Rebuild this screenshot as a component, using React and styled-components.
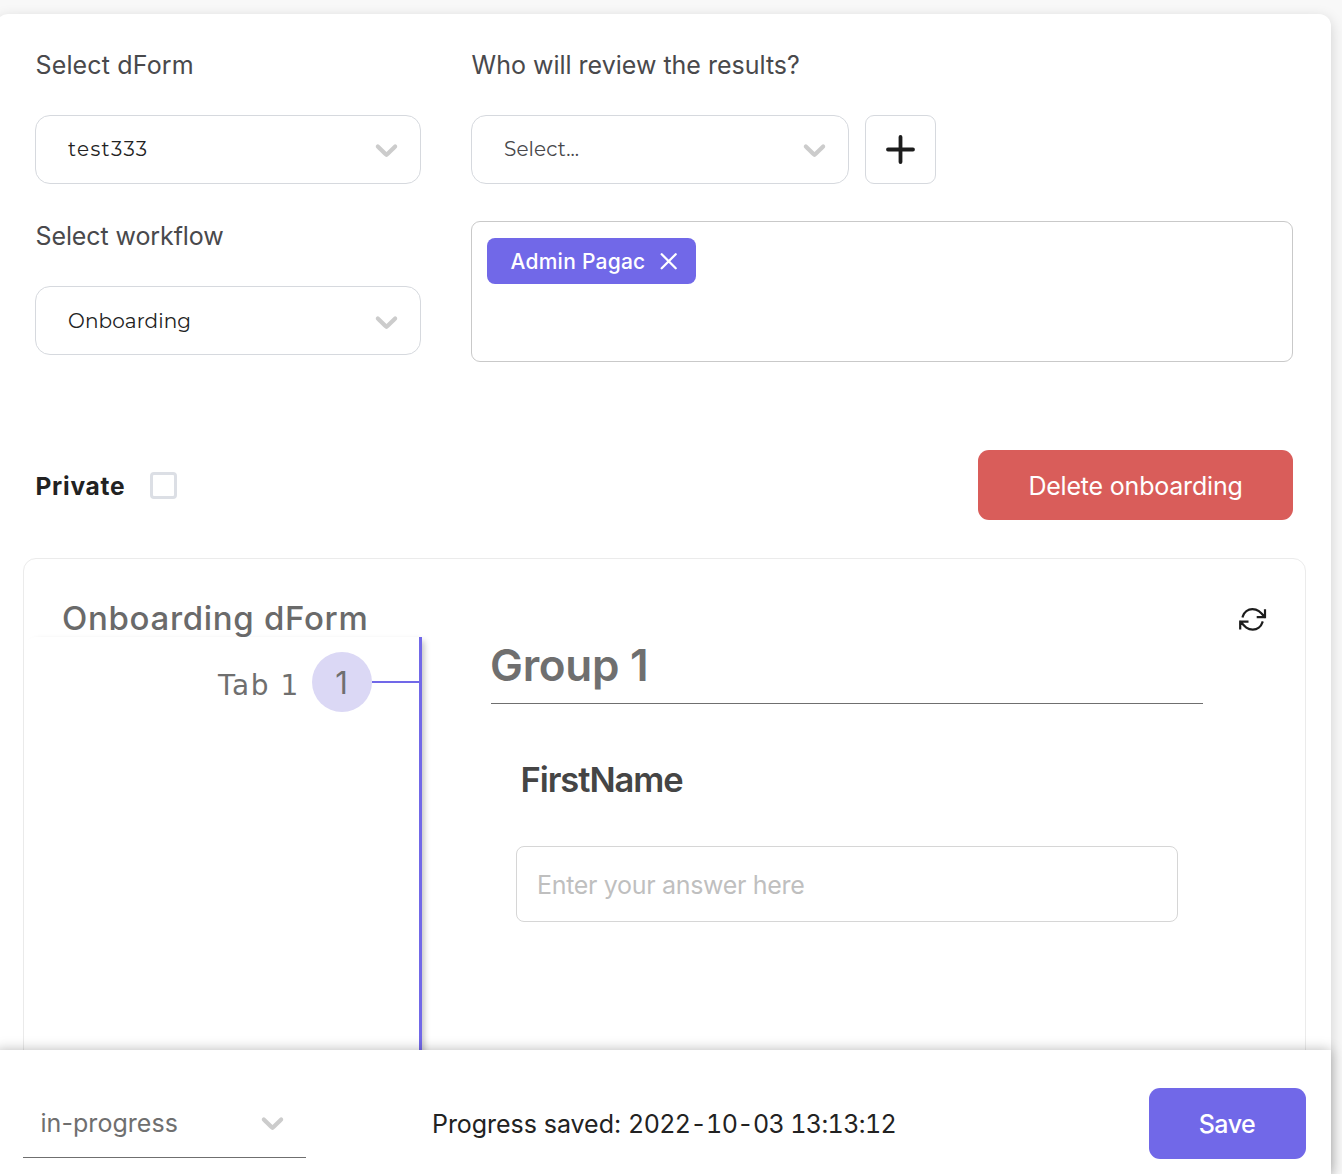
import React from "react";
import styled, { createGlobalStyle } from "styled-components";

const GlobalStyle = createGlobalStyle`
  *, *::before, *::after { box-sizing: border-box; }
  body {
    margin: 0;
    background: #f8f8f8;
    font-family: Inter, "Liberation Sans", sans-serif;
    font-size: 25px;
    color: #222;
  }
  button, input { font: inherit; margin: 0; }
`;

const Page = styled.div`
  height: 1174px;
  padding: 14px 11px 0 0;
  overflow: hidden;
`;

const Card = styled.main`
  display: flex;
  flex-direction: column;
  height: 1160px;
  margin-left: -4px;
  background: #fff;
  border-radius: 12px 12px 0 0;
  box-shadow: 0 4px 14px rgba(0, 0, 0, 0.17);
`;

const Body = styled.div`
  flex: 1;
  min-height: 0;
  overflow: hidden;
  padding: 35px 25px 0 27px;
`;

const Settings = styled.section`
  display: grid;
  grid-template-columns: 386px 822px;
  column-gap: 50px;
  padding-left: 12px;
`;

const Column = styled.div`
  display: flex;
  flex-direction: column;
  gap: ${(p) => p.$gap}px;
`;

const Field = styled.div`
  display: flex;
  flex-direction: column;
  gap: 34px;
`;

const Label = styled.label`
  height: 32px;
  padding-left: 0.5px;
  line-height: 32px;
  color: #49494c;
  letter-spacing: ${(p) => p.$tracking || 0}px;
`;

const SelectBox = styled.div`
  display: flex;
  flex: ${(p) => (p.$grow ? 1 : "none")};
  align-items: center;
  justify-content: space-between;
  height: 69px;
  padding: 0 15px ${(p) => (p.$raised ? 2 : 0)}px 32px;
  border: 1px solid #d6d9de;
  border-radius: 15px;
  font-family: Montserrat, Inter, sans-serif;
  font-size: 20px;
  font-weight: 450;
  color: ${(p) => (p.$placeholder ? "#48484b" : "#222")};
`;

const SelectValue = styled.span`
  line-height: 28px;
  letter-spacing: ${(p) => p.$tracking || 0}px;
`;

const ReviewerRow = styled.div`
  display: flex;
  gap: 16px;
  width: 465px;
`;

const AddButton = styled.button`
  display: grid;
  place-items: center;
  width: 71px;
  height: 69px;
  padding: 0;
  border: 1px solid #d6d9de;
  border-radius: 9px;
  background: #fff;
`;

const ReviewerList = styled.div`
  height: 141px;
  padding: 16px 15px;
  border: 1px solid #c9c9c9;
  border-radius: 9px;
`;

const Chip = styled.span`
  display: flex;
  align-items: center;
  width: 209px;
  height: 46px;
  padding: 0 18.5px 0 23.5px;
  justify-content: space-between;
  border-radius: 8px;
  background: #7168e8;
  color: #fff;
  font-size: 21px;
  font-weight: 500;
  letter-spacing: 0.25px;
`;

const Actions = styled.section`
  display: flex;
  align-items: center;
  height: 70px;
  margin: 88px 13px 38px 12px;
`;

const PrivateLabel = styled.label`
  display: flex;
  align-items: center;
  gap: 24.5px;
  padding: 1px 0 0 0.5px;
  font-size: 24.5px;
  font-weight: 700;
  letter-spacing: 0.75px;
`;

const Checkbox = styled.input`
  appearance: none;
  width: 27px;
  height: 27px;
  border: 3px solid #dcdfe5;
  border-radius: 4px;
  background: #fff;
`;

const Button = styled.button`
  width: ${(p) => p.$width}px;
  height: ${(p) => p.$height}px;
  margin-left: auto;
  padding: ${(p) => (p.$danger ? "2px 0 0" : "0 1px 0 0")};
  border: 0;
  border-radius: 11px;
  background: ${(p) => (p.$danger ? "#d95d5a" : "#7168e8")};
  color: #fff;
  font-weight: ${(p) => (p.$danger ? 400 : 500)};
  letter-spacing: ${(p) => (p.$danger ? -0.2 : -0.5)}px;
`;

const Preview = styled.section`
  height: 640px;
  border: 1px solid #ebebeb;
  border-radius: 13px;
`;

const PreviewHeader = styled.header`
  display: flex;
  align-items: center;
  justify-content: space-between;
  height: 78px;
  padding: 41px 38px 0;
`;

const PreviewTitle = styled.h2`
  margin: 0;
  font-size: 33px;
  line-height: 37px;
  font-weight: 500;
  letter-spacing: 0.68px;
  color: #6a6a6a;
`;

const PreviewContent = styled.div`
  display: flex;
  height: 561px;
`;

const TabRail = styled.nav`
  width: 398px;
  padding-top: 15px;
  border-right: 3px solid #7168e8;
  border-radius: 12px 0 0 0;
  box-shadow: 4px 2px 6px -2px rgba(0, 0, 0, 0.25);
`;

const Tab = styled.div`
  display: flex;
  align-items: center;
  justify-content: flex-end;
`;

const TabName = styled.span`
  padding: 6px 12px 0 0;
  font-family: "DejaVu Sans", sans-serif;
  font-size: 28px;
  letter-spacing: 1.6px;
  color: #6f6f6f;
`;

const TabNumber = styled.span`
  width: 60px;
  height: 60px;
  border-radius: 50%;
  background: #dbd8f5;
  color: #6f6f6f;
  font-size: 31px;
  line-height: 62px;
  text-align: center;
  text-indent: -1px;
`;

const TabConnector = styled.span`
  width: 47px;
  height: 2px;
  background: #7168e8;
`;

const Group = styled.div`
  width: 712px;
  margin-left: 69px;
`;

const GroupTitle = styled.h1`
  margin: 0 0 56px;
  padding-bottom: 10px;
  border-bottom: 1px solid #6f6f6f;
  font-size: 44px;
  line-height: 56px;
  font-weight: 600;
  letter-spacing: -0.3px;
  text-indent: -1px;
  color: #6f6f6f;
`;

const Question = styled.div`
  display: flex;
  flex-direction: column;
  gap: 46px;
  padding: 0 25px;
`;

const QuestionTitle = styled.h3`
  margin: 0;
  padding-left: 4.5px;
  font-size: 34.5px;
  line-height: 40px;
  font-weight: 600;
  letter-spacing: -1.05px;
  color: #454545;
`;

const Answer = styled.input`
  width: 662px;
  height: 76px;
  padding: 2px 20px 0;
  border: 1px solid #d6d6d6;
  border-radius: 8px;
  background: #fff;
  letter-spacing: -0.32px;
  &::placeholder { color: #bfbfbf; opacity: 1; }
`;

const Footer = styled.footer`
  position: relative;
  display: flex;
  height: 124px;
  padding: 38px 25px 0 27px;
  background: #fff;
  box-shadow: 0 0 12px rgba(0, 0, 0, 0.28);
`;

const Status = styled.div`
  display: flex;
  align-items: center;
  justify-content: space-between;
  width: 283px;
  height: 70px;
  padding: 0 15px 1px 17.5px;
  border-bottom: 1px solid #6f6f6f;
  color: #6f6f6f;
  letter-spacing: 0.05px;
`;

const StatusValue = styled.span`
  padding-top: 1px;
`;

const Saved = styled.p`
  margin: 0 0 0 126px;
  line-height: 73px;
  letter-spacing: -0.05px;
`;

const Timestamp = styled.time`
  letter-spacing: -0.6px;
  font-variant-numeric: tabular-nums;
`;

const ChevronIcon = styled.svg`
  margin-top: 1px;
  fill: #ccc;
`;

const Chevron = () => (
  <ChevronIcon width="37" height="37" viewBox="0 0 20 20">
    <path d="M4.516 7.548c0.436-0.446 1.043-0.481 1.576 0l3.908 3.747 3.908-3.747c0.533-0.481 1.141-0.446 1.574 0 0.436 0.445 0.408 1.197 0 1.615-0.406 0.418-4.695 4.502-4.695 4.502-0.217 0.223-0.502 0.335-0.787 0.335s-0.57-0.112-0.789-0.335c0 0-4.287-4.084-4.695-4.502s-0.436-1.17 0-1.615z" />
  </ChevronIcon>
);

const Plus = () => (
  <svg width="29" height="29" viewBox="0 0 29 29" stroke="#1c1c1c" strokeWidth="3.8" strokeLinecap="round">
    <path d="M14.5 2v25M2 14.5h25" />
  </svg>
);

const Close = () => (
  <svg width="18" height="18" viewBox="0 0 18 18" stroke="#fff" strokeWidth="2.3" strokeLinecap="round">
    <path d="M1.7 2.3l14 14M15.7 2.3l-14 14" />
  </svg>
);

const Refresh = () => (
  <svg width="28" height="24" viewBox="0 0 28 24" fill="none" stroke="#1c1c1c" strokeWidth="2.2" strokeLinecap="square">
    <path d="M3.8 9.4A10.2 10.2 0 0 1 13.4 2.2C18.6 2.2 21.4 5 25.6 10M26 3.4v6.8h-7.2" />
    <path d="M23.4 15.4A10.2 10.2 0 0 1 13.8 22.6C8.6 22.6 5.8 19.8 1.6 14.8M1.2 21.4v-6.8h7.2" />
  </svg>
);

const Select = ({ value, tracking, placeholder, grow, raised }) => (
  <SelectBox $placeholder={placeholder} $grow={grow} $raised={raised}>
    <SelectValue $tracking={tracking}>{value}</SelectValue>
    <Chevron />
  </SelectBox>
);

export default function App() {
  return (
    <Page>
      <GlobalStyle />
      <Card>
        <Body>
          <Settings>
            <Column $gap={36}>
              <Field>
                <Label $tracking={0.15}>Select dForm</Label>
                <Select value="test333" tracking={1.3} raised />
              </Field>
              <Field>
                <Label $tracking={-0.1}>Select workflow</Label>
                <Select value="Onboarding" tracking={0.1} />
              </Field>
            </Column>
            <Column $gap={37}>
              <Field>
                <Label>Who will review the results?</Label>
                <ReviewerRow>
                  <Select value="Select..." tracking={0.1} placeholder grow raised />
                  <AddButton aria-label="Add reviewer"><Plus /></AddButton>
                </ReviewerRow>
              </Field>
              <ReviewerList>
                <Chip>Admin Pagac<Close /></Chip>
              </ReviewerList>
            </Column>
          </Settings>
          <Actions>
            <PrivateLabel>Private<Checkbox type="checkbox" /></PrivateLabel>
            <Button $danger $width={315} $height={70}>Delete onboarding</Button>
          </Actions>
          <Preview>
            <PreviewHeader>
              <PreviewTitle>Onboarding dForm</PreviewTitle>
              <Refresh />
            </PreviewHeader>
            <PreviewContent>
              <TabRail>
                <Tab>
                  <TabName>Tab 1</TabName>
                  <TabNumber>1</TabNumber>
                  <TabConnector />
                </Tab>
              </TabRail>
              <Group>
                <GroupTitle>Group 1</GroupTitle>
                <Question>
                  <QuestionTitle>FirstName</QuestionTitle>
                  <Answer placeholder="Enter your answer here" />
                </Question>
              </Group>
            </PreviewContent>
          </Preview>
        </Body>
        <Footer>
          <Status><StatusValue>in-progress</StatusValue><Chevron /></Status>
          <Saved>Progress saved: <Timestamp>2022-10-03 13:13:12</Timestamp></Saved>
          <Button $width={157} $height={71}>Save</Button>
        </Footer>
      </Card>
    </Page>
  );
}
